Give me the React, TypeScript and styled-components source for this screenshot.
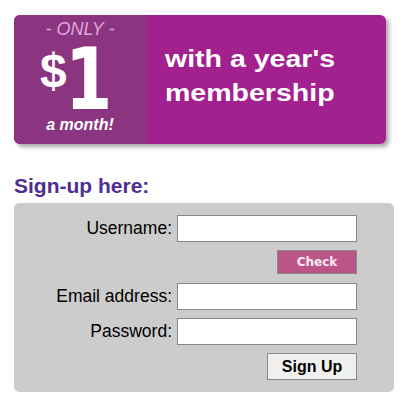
import React from 'react';
import styled, { createGlobalStyle } from 'styled-components';

const GlobalStyle = createGlobalStyle`
    body {
        margin: 0;
        background: #ffffff;
        font-family: "Liberation Sans", Arial, sans-serif;
    }
`;

export default function App() {
    return (
        <Page>
            <GlobalStyle />
            <Banner>
                <PricePanel>
                    <Only>- ONLY -</Only>
                    <PriceRow>
                        <Dollar>$</Dollar>
                        <Amount>1</Amount>
                    </PriceRow>
                    <PerMonth>a month!</PerMonth>
                </PricePanel>
                <PitchPanel>
                    <Pitch>with a year's</Pitch>
                    <Pitch>membership</Pitch>
                </PitchPanel>
            </Banner>

            <Heading>Sign-up here:</Heading>
            <FormBox>
                <Label htmlFor="username">Username:</Label>
                <Field id="username" type="text" />

                <ButtonCell>
                    <CheckButton>Check</CheckButton>
                </ButtonCell>

                <Label htmlFor="email">Email address:</Label>
                <Field id="email" type="text" />

                <Label htmlFor="password">Password:</Label>
                <Field id="password" type="password" />

                <ButtonCell>
                    <SubmitButton>Sign Up</SubmitButton>
                </ButtonCell>
            </FormBox>
        </Page>
    );
}

const Page = styled.div`
    padding: 15px 15px 12px 14px;
`;

const Banner = styled.div`
    display: flex;
    width: 372px;
    height: 129px;
    border-radius: 6px;
    overflow: hidden;
    background: #a3218f;
    box-shadow: 3px 3px 4px rgba(0, 0, 0, 0.35);
`;

const PricePanel = styled.div`
    display: flex;
    flex-direction: column;
    align-items: center;
    width: 132px;
    background: #8b3580;
    color: #ffffff;
`;

const Only = styled.div`
    margin-top: 6px;
    font-size: 18px;
    line-height: 16px;
    font-style: italic;
    color: #dfa6da;
`;

const PriceRow = styled.div`
    display: flex;
    align-self: stretch;
    align-items: flex-start;
    height: 80px;
    padding-left: 26px;
`;

const Dollar = styled.span`
    margin-top: 10px;
    font-size: 48px;
    line-height: 1;
    font-weight: bold;
`;

const Amount = styled.span`
    margin-left: -8px;
    font-family: "DejaVu Sans", sans-serif;
    font-size: 85px;
    line-height: 1;
    font-weight: bold;
    transform: scaleX(0.8);
`;

const PerMonth = styled.div`
    font-size: 16px;
    line-height: 16px;
    font-weight: bold;
    font-style: italic;
`;

const PitchPanel = styled.div`
    display: flex;
    flex-direction: column;
    padding: 27px 0 0 19px;
`;

const Pitch = styled.div`
    font-size: 23px;
    line-height: 34px;
    font-weight: bold;
    color: #ffffff;
    white-space: nowrap;
    transform: scaleX(1.24);
    transform-origin: left center;
`;

const Heading = styled.h2`
    margin: 30px 0 5px 0;
    font-size: 21px;
    line-height: 24px;
    font-weight: bold;
    color: #4f2d91;
`;

const FormBox = styled.div`
    display: grid;
    grid-template-columns: 1fr 180px;
    grid-template-rows: 27px 25px 27px 27px 27px;
    column-gap: 5px;
    row-gap: 8px;
    width: 380px;
    box-sizing: border-box;
    padding: 12px 37px 12px 14px;
    border-radius: 5px;
    background: #cccccc;
`;

const Label = styled.label`
    justify-self: end;
    align-self: center;
    font-size: 17.5px;
    color: #000000;
`;

const Field = styled.input`
    width: 180px;
    height: 27px;
    box-sizing: border-box;
    margin: 0;
    border: 1px solid #888888;
    background: #ffffff;
    outline: none;
`;

const ButtonCell = styled.div`
    grid-column: 2;
    display: flex;
    justify-content: flex-end;
    align-items: flex-start;
`;

const CheckButton = styled.button`
    width: 80px;
    height: 24px;
    box-sizing: border-box;
    border: 1px solid #888888;
    background: #bb5588;
    color: #fbe9f4;
    font-family: "DejaVu Sans", Verdana, sans-serif;
    font-size: 12px;
    font-weight: bold;
    padding: 0;
`;

const SubmitButton = styled.button`
    width: 90px;
    height: 27px;
    box-sizing: border-box;
    border: 1px solid #888888;
    background: #f0f0f0;
    color: #000000;
    font-family: "Liberation Sans", Arial, sans-serif;
    font-size: 16px;
    font-weight: bold;
    padding: 0;
`;
